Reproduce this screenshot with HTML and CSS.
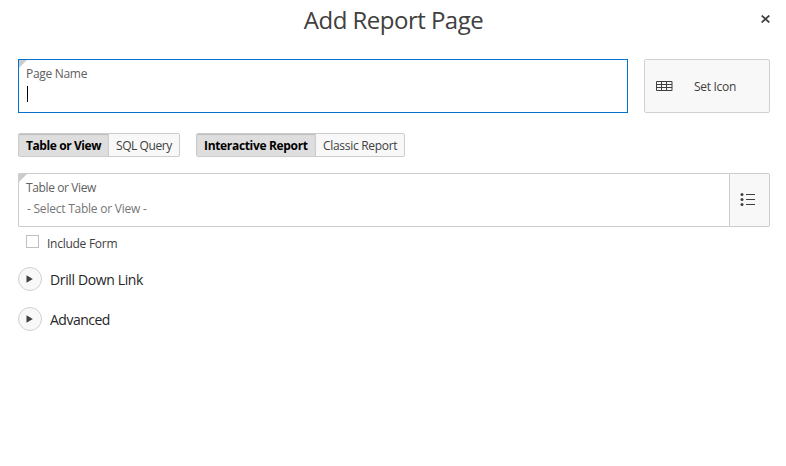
FILE: index.html
```html
<!DOCTYPE html>
<html lang="en">
<head>
<meta charset="utf-8">
<title>Add Report Page</title>
<link rel="stylesheet" href="styles.css">
</head>
<body>
<header class="header">
  <h1 class="title"><span>Add Report Page</span></h1>
  <button class="close" aria-label="Close"><svg width="9" height="8" viewBox="0 0 9 8"><path d="M.7.5 8.3 7.5M8.3.5.7 7.5" stroke="#404040" stroke-width="1.7"/></svg></button>
</header>
<main class="content">
  <div class="row">
    <div class="field field-active">
      <label class="label name-label">Page Name</label>
      <div class="caret"></div>
    </div>
    <button class="icon-button">
      <svg width="17" height="10" viewBox="0 0 17 10" fill="none" stroke="#404040"><path d="M.5.5h15.5v9H.5zM.5 3.5h15.5M.5 6.5h15.5M5.5.5v9M10.5.5v9"/></svg>
      <span class="set-label">Set Icon</span>
    </button>
  </div>
  <div class="toggles">
    <div class="group source">
      <button class="option selected source-a">Table or View</button><button class="option source-b">SQL Query</button>
    </div>
    <div class="group type">
      <button class="option selected type-a">Interactive Report</button><button class="option type-b">Classic Report</button>
    </div>
  </div>
  <div class="select">
    <div class="field">
      <label class="label table-label">Table or View</label>
      <div class="placeholder">- Select Table or View -</div>
    </div>
    <button class="list-button" aria-label="List">
      <svg width="16" height="14" viewBox="0 0 16 14" fill="#404040"><circle cx="2" cy="1.5" r="1.5"/><circle cx="2" cy="6.5" r="1.5"/><circle cx="2" cy="11.5" r="1.5"/><path d="M6 1h9v1H6zM6 6h9v1H6zM6 11h9v1H6z"/></svg>
    </button>
  </div>
  <div class="check"><span class="box"></span><span class="check-label">Include Form</span></div>
  <div class="region">
    <button class="expand" aria-label="Expand"><svg width="7" height="8" viewBox="0 0 7 8"><path d="M.5.3 6.8 4 .5 7.7z" fill="#404040"/></svg></button>
    <span class="drill">Drill Down Link</span>
  </div>
  <div class="region">
    <button class="expand" aria-label="Expand"><svg width="7" height="8" viewBox="0 0 7 8"><path d="M.5.3 6.8 4 .5 7.7z" fill="#404040"/></svg></button>
    <span class="advanced">Advanced</span>
  </div>
</main>
</body>
</html>
```
FILE: styles.css
```css
* { box-sizing: border-box; }
body { margin: 0; background: #fff; color: #404040; font: 12px/16px "Open Sans", "Noto Sans", sans-serif; white-space: nowrap; }
button { margin: 0; padding: 0; border: 0; background: none; font: inherit; color: inherit; }
svg { display: block; flex: none; }
.header { display: grid; grid-template-columns: 48px 1fr 48px; height: 42px; }
.title { grid-column: 2; margin: 0; padding: 4px 0 0 1px; font-size: 24px; line-height: 32px; font-weight: 400; text-align: center; letter-spacing: -0.52px; }
.close { display: flex; justify-content: center; padding: 15px 0 0 6px; height: 30px; }
.content { padding: 17px 16px 0 18px; }
.row { display: flex; gap: 16px; }
.field { position: relative; flex: 1; height: 54px; padding: 6px 8px; border: 1px solid #ccc; border-radius: 2px; background: #fff; }
.field-active { flex: 0 0 610px; border-color: #0572ce; border-radius: 0; }
.field::before { content: ""; position: absolute; left: 0; top: 0; width: 8px; height: 8px; background: #ccc; clip-path: polygon(0 0, 100% 0, 0 100%); }
.label { display: block; margin-left: -1px; color: #606060; }
.name-label { letter-spacing: -0.3px; }
.table-label { letter-spacing: -0.38px; }
.caret { width: 1px; height: 16px; margin-top: 4px; background: #000; }
.icon-button { display: flex; align-items: center; flex: 0 0 126px; height: 54px; padding-left: 11px; gap: 21px; border: 1px solid #d0d0d0; border-radius: 2px; background: #f8f8f8; }
.set-label { padding-top: 2px; letter-spacing: -0.3px; }
.toggles { display: flex; gap: 16px; margin-top: 20px; }
.group { display: flex; height: 24px; border: 1px solid #ccc; border-radius: 2px; overflow: hidden; background: #f8f8f8; }
.source { width: 162px; }
.type { width: 209px; }
.option { flex: 1; padding: 2px 0 0 7px; text-align: left; letter-spacing: -0.42px; }
.selected { background: #dedede; color: #000; font-weight: 700; border-right: 1px solid #ccc; box-shadow: inset 0 1px 1px #bcbcbc; }
.source-a { flex: 0 0 90px; }
.type-a { flex: 0 0 119px; letter-spacing: -0.33px; }
.type-b { letter-spacing: -0.3px; }
.select { display: flex; margin-top: 16px; }
.select .field { border-right: 0; border-radius: 2px 0 0 2px; }
.placeholder { margin-top: 5px; color: #767676; letter-spacing: -0.23px; }
.list-button { width: 41px; height: 54px; padding: 0 0 0 10px; border: 1px solid #ccc; border-radius: 0 2px 2px 0; background: #f8f8f8; }
.check { display: flex; align-items: center; gap: 8px; height: 17px; margin: 8px 0 0 8px; }
.check-label { letter-spacing: -0.27px; }
.box { width: 13px; height: 13px; margin-bottom: 4px; border: 1px solid #bfbfbf; }
.region { display: flex; align-items: center; gap: 8px; height: 24px; margin-top: 16px; font-size: 14px; line-height: 24px; color: #262626; }
.check + .region { margin-top: 15px; }
.expand { display: flex; align-items: center; justify-content: center; width: 24px; height: 24px; padding-right: 1px; border: 1px solid #d0d0d0; border-radius: 50%; background: #f8f8f8; }
.region span { padding-top: 2px; }
.drill { letter-spacing: -0.37px; }
.advanced { letter-spacing: -0.5px; }
```
